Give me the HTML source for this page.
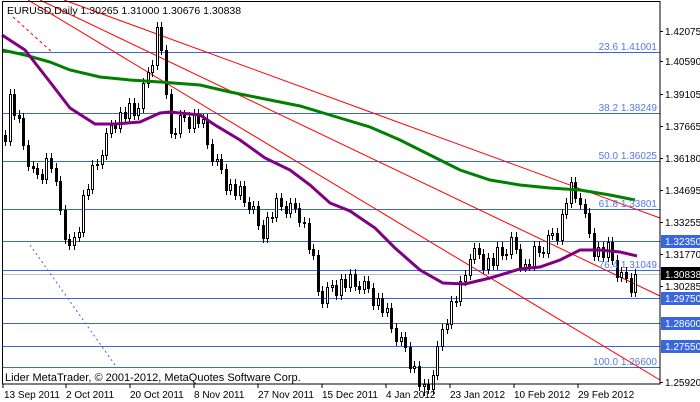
<!DOCTYPE html>
<html><head><meta charset="utf-8"><style>
html,body{margin:0;padding:0;background:#fff;width:700px;height:402px;overflow:hidden}
svg{display:block;font-family:"Liberation Sans",sans-serif}
</style></head><body>
<svg width="700" height="402" viewBox="0 0 700 402" xmlns="http://www.w3.org/2000/svg">
<rect x="0" y="0" width="700" height="402" fill="#fff"/>
<g stroke="#3a66dd" stroke-width="1">
<line x1="2" y1="52.5" x2="660" y2="52.5"/>
<line x1="2" y1="113.5" x2="660" y2="113.5"/>
<line x1="2" y1="161.5" x2="660" y2="161.5"/>
<line x1="2" y1="209.5" x2="660" y2="209.5"/>
<line x1="2" y1="241.5" x2="660" y2="241.5"/>
<line x1="2" y1="270.5" x2="660" y2="270.5"/>
<line x1="2" y1="298.5" x2="660" y2="298.5"/>
<line x1="2" y1="323.5" x2="660" y2="323.5"/>
<line x1="2" y1="346.5" x2="660" y2="346.5"/>
<line x1="2" y1="367.5" x2="660" y2="367.5"/>
</g>
<line x1="2" y1="274.5" x2="660" y2="274.5" stroke="#c0c0c0"/>
<g stroke="#ff0000" stroke-width="1" fill="none">
<line x1="64" y1="0" x2="660" y2="218"/>
<line x1="40" y1="0" x2="660" y2="296"/>
<line x1="28" y1="0" x2="660" y2="380"/>
<line x1="13" y1="17" x2="53" y2="53" stroke-dasharray="3,3"/>
</g>
<line x1="30" y1="245" x2="115" y2="365" stroke="#3a66dd" stroke-dasharray="2,3"/>
<path fill="none" stroke="#000" d="M5.5 130V146M14.5 89V120M19.5 110V123M23.5 113V150M28.5 140V171M33.5 161V173M37.5 163V179M42.5 169V184M51.5 153V173M56.5 163V186M60.5 176V215M65.5 205V244M69.5 234V250M115.5 120V133M125.5 107V123M134.5 98V120M161.5 22V55M166.5 45V99M171.5 89V138M175.5 128V139M184.5 110V122M189.5 112V133M198.5 109V128M207.5 114V149M212.5 139V166M221.5 154V174M226.5 164V195M235.5 179V200M244.5 181V207M249.5 197V214M258.5 201V230M263.5 220V243M272.5 212V223M281.5 193V211M286.5 201V218M295.5 198V213M299.5 203V227M304.5 217V228M309.5 218V254M313.5 244V260M318.5 250V296M322.5 286V308M336.5 280V300M345.5 274V292M355.5 269V291M359.5 281V294M368.5 276V293M373.5 283V310M382.5 293V317M391.5 303V333M396.5 323V346M405.5 332V352M410.5 342V373M419.5 361V391M428.5 379V394M456.5 296V307M479.5 243V259M483.5 249V274M493.5 253V270M502.5 242V260M516.5 232V254M520.5 244V272M529.5 259V271M539.5 241V257M543.5 247V258M557.5 228V245M575.5 177V203M580.5 193V209M585.5 199V218M589.5 208V238M594.5 228V261M603.5 242V262M612.5 237V265M617.5 255V282M626.5 267V283M631.5 273V297M10.5 89V146M46.5 153V184M74.5 232V250M79.5 227V242M83.5 190V237M88.5 184V200M92.5 160V194M97.5 159V170M102.5 150V169M106.5 128V160M111.5 120V138M120.5 107V133M129.5 98V123M138.5 103V120M143.5 78V113M148.5 67V88M152.5 60V77M157.5 22V70M180.5 110V138M194.5 109V133M203.5 114V128M217.5 154V166M230.5 179V195M240.5 181V200M253.5 201V214M267.5 212V243M276.5 193V222M290.5 198V218M327.5 282V308M332.5 280V292M341.5 274V300M350.5 269V292M364.5 276V294M378.5 293V310M387.5 303V317M401.5 332V346M414.5 361V373M424.5 379V396M433.5 370V394M437.5 341V380M442.5 324V351M447.5 319V334M451.5 296V329M460.5 276V306M465.5 270V286M470.5 254V280M474.5 243V264M488.5 253V274M497.5 242V270M506.5 249V260M511.5 232V259M525.5 259V272M534.5 241V271M548.5 230V258M552.5 228V240M562.5 209V245M566.5 198V219M571.5 177V208M598.5 242V261M608.5 237V262M621.5 267V282M635.5 269V297"/>
<path fill="#000" stroke="#000" d="M4.5 135.5h2v6h-2zM13.5 94.5h2v21h-2zM18.5 115.5h2v3h-2zM22.5 118.5h2v27h-2zM27.5 145.5h2v21h-2zM32.5 166.5h2v2h-2zM36.5 168.5h2v6h-2zM41.5 174.5h2v5h-2zM50.5 158.5h2v10h-2zM55.5 168.5h2v13h-2zM59.5 181.5h2v29h-2zM64.5 210.5h2v29h-2zM68.5 239.5h2v6h-2zM114.5 125.5h2v3h-2zM124.5 112.5h2v6h-2zM133.5 103.5h2v12h-2zM160.5 27.5h2v23h-2zM165.5 50.5h2v44h-2zM170.5 94.5h2v39h-2zM174.5 133.5h2v1h-2zM183.5 115.5h2v2h-2zM188.5 117.5h2v11h-2zM197.5 114.5h2v9h-2zM206.5 119.5h2v25h-2zM211.5 144.5h2v17h-2zM220.5 159.5h2v10h-2zM225.5 169.5h2v21h-2zM234.5 184.5h2v11h-2zM243.5 186.5h2v16h-2zM248.5 202.5h2v7h-2zM257.5 206.5h2v19h-2zM262.5 225.5h2v13h-2zM271.5 217.5h2v1h-2zM280.5 198.5h2v8h-2zM285.5 206.5h2v7h-2zM294.5 203.5h2v5h-2zM298.5 208.5h2v14h-2zM303.5 222.5h2v1h-2zM308.5 223.5h2v26h-2zM312.5 249.5h2v6h-2zM317.5 255.5h2v36h-2zM321.5 291.5h2v12h-2zM335.5 285.5h2v10h-2zM344.5 279.5h2v8h-2zM354.5 274.5h2v12h-2zM358.5 286.5h2v3h-2zM367.5 281.5h2v7h-2zM372.5 288.5h2v17h-2zM381.5 298.5h2v14h-2zM390.5 308.5h2v20h-2zM395.5 328.5h2v13h-2zM404.5 337.5h2v10h-2zM409.5 347.5h2v21h-2zM418.5 366.5h2v20h-2zM427.5 384.5h2v5h-2zM455.5 301.5h2v1h-2zM478.5 248.5h2v6h-2zM482.5 254.5h2v15h-2zM492.5 258.5h2v7h-2zM501.5 247.5h2v8h-2zM515.5 237.5h2v12h-2zM519.5 249.5h2v18h-2zM528.5 264.5h2v2h-2zM538.5 246.5h2v6h-2zM542.5 252.5h2v1h-2zM556.5 233.5h2v7h-2zM574.5 182.5h2v16h-2zM579.5 198.5h2v6h-2zM584.5 204.5h2v9h-2zM588.5 213.5h2v20h-2zM593.5 233.5h2v23h-2zM602.5 247.5h2v10h-2zM611.5 242.5h2v18h-2zM616.5 260.5h2v17h-2zM625.5 272.5h2v6h-2zM630.5 278.5h2v14h-2z"/>
<path fill="#fff" stroke="#000" d="M9.5 94.5h2v47h-2zM45.5 158.5h2v21h-2zM73.5 237.5h2v8h-2zM78.5 232.5h2v5h-2zM82.5 195.5h2v37h-2zM87.5 189.5h2v6h-2zM91.5 165.5h2v24h-2zM96.5 164.5h2v1h-2zM101.5 155.5h2v9h-2zM105.5 133.5h2v22h-2zM110.5 125.5h2v8h-2zM119.5 112.5h2v16h-2zM128.5 103.5h2v15h-2zM137.5 108.5h2v7h-2zM142.5 83.5h2v25h-2zM147.5 72.5h2v11h-2zM151.5 65.5h2v7h-2zM156.5 27.5h2v38h-2zM179.5 115.5h2v18h-2zM193.5 114.5h2v14h-2zM202.5 119.5h2v4h-2zM216.5 159.5h2v2h-2zM229.5 184.5h2v6h-2zM239.5 186.5h2v9h-2zM252.5 206.5h2v3h-2zM266.5 217.5h2v21h-2zM275.5 198.5h2v19h-2zM289.5 203.5h2v10h-2zM326.5 287.5h2v16h-2zM331.5 285.5h2v2h-2zM340.5 279.5h2v16h-2zM349.5 274.5h2v13h-2zM363.5 281.5h2v8h-2zM377.5 298.5h2v7h-2zM386.5 308.5h2v4h-2zM400.5 337.5h2v4h-2zM413.5 366.5h2v2h-2zM423.5 384.5h2v2h-2zM432.5 375.5h2v14h-2zM436.5 346.5h2v29h-2zM441.5 329.5h2v17h-2zM446.5 324.5h2v5h-2zM450.5 301.5h2v23h-2zM459.5 281.5h2v20h-2zM464.5 275.5h2v6h-2zM469.5 259.5h2v16h-2zM473.5 248.5h2v11h-2zM487.5 258.5h2v11h-2zM496.5 247.5h2v18h-2zM505.5 254.5h2v1h-2zM510.5 237.5h2v17h-2zM524.5 264.5h2v3h-2zM533.5 246.5h2v20h-2zM547.5 235.5h2v18h-2zM551.5 233.5h2v2h-2zM561.5 214.5h2v26h-2zM565.5 203.5h2v11h-2zM570.5 182.5h2v21h-2zM597.5 247.5h2v9h-2zM607.5 242.5h2v15h-2zM620.5 272.5h2v5h-2zM634.5 274.5h2v18h-2z"/>
<polyline fill="none" stroke="#008000" stroke-width="3" points="2,50 25,55 50,62 70,70 100,77 130,80 160,82 200,85 230,92 260,98 300,106 330,115 370,127 400,140 430,155 460,170 490,180 520,185 550,188 580,190 610,195 635,200"/>
<polyline fill="none" stroke="#800080" stroke-width="3" points="2,35 25,50 50,82 70,108 95,124 115,124 140,122 160,113 170,112 200,115 215,125 240,140 265,158 290,170 310,185 330,203 350,211 375,228 395,248 420,270 443,283 465,284 490,278 520,269 540,267 560,260 580,250 600,250 620,252 637,256"/>
<g font-size="10" fill="#5577ee" text-anchor="end">
<text x="657" y="50">23.6 1.41001</text>
<text x="657" y="111">38.2 1.38249</text>
<text x="657" y="159">50.0 1.36025</text>
<text x="657" y="207">61.8 1.33801</text>
<text x="657" y="268">76.4 1.31049</text>
<text x="657" y="365">100.0 1.26600</text>
</g>
<rect x="2.5" y="1.5" width="657.5" height="382.5" fill="none" stroke="#000"/>
<text x="7" y="14" font-size="10.5" fill="#000">EURUSD,Daily  1.30265 1.31000 1.30676 1.30838</text>
<text x="5" y="381" font-size="11" fill="#000">Lider MetaTrader, © 2001-2012, MetaQuotes Software Corp.</text>
<g font-size="10" fill="#000">
<text x="665" y="35">1.42075</text>
<text x="665" y="65">1.40590</text>
<text x="665" y="98">1.39105</text>
<text x="665" y="130">1.37665</text>
<text x="665" y="162">1.36180</text>
<text x="665" y="194">1.34695</text>
<text x="665" y="226">1.33255</text>
<text x="665" y="258">1.31770</text>
<text x="665" y="290">1.30285</text>
<text x="665" y="386">1.25920</text>
</g>
<g stroke="#000"><line x1="660" y1="31.5" x2="663" y2="31.5"/><line x1="660" y1="61.5" x2="663" y2="61.5"/><line x1="660" y1="94.5" x2="663" y2="94.5"/><line x1="660" y1="126.5" x2="663" y2="126.5"/><line x1="660" y1="158.5" x2="663" y2="158.5"/><line x1="660" y1="190.5" x2="663" y2="190.5"/><line x1="660" y1="222.5" x2="663" y2="222.5"/><line x1="660" y1="254.5" x2="663" y2="254.5"/><line x1="660" y1="286.5" x2="663" y2="286.5"/><line x1="660" y1="382.5" x2="663" y2="382.5"/></g>
<g font-size="10" fill="#fff">
<rect x="661" y="235" width="39" height="13" fill="#3a66dd"/><text x="665" y="245">1.32350</text>
<rect x="661" y="267" width="39" height="13" fill="#000"/><text x="665" y="278">1.30838</text>
<rect x="661" y="292" width="39" height="13" fill="#3a66dd"/><text x="665" y="302">1.29750</text>
<rect x="661" y="317" width="39" height="13" fill="#3a66dd"/><text x="665" y="327">1.28600</text>
<rect x="661" y="340" width="39" height="13" fill="#3a66dd"/><text x="665" y="350">1.27550</text>
</g>
<g font-size="10" fill="#000">
<text x="4" y="398">13 Sep 2011</text>
<text x="66" y="398">2 Oct 2011</text>
<text x="130" y="398">20 Oct 2011</text>
<text x="194" y="398">8 Nov 2011</text>
<text x="258" y="398">27 Nov 2011</text>
<text x="322" y="398">15 Dec 2011</text>
<text x="386" y="398">4 Jan 2012</text>
<text x="450" y="398">23 Jan 2012</text>
<text x="514" y="398">10 Feb 2012</text>
<text x="578" y="398">29 Feb 2012</text>
</g>
<g stroke="#000"><line x1="3" y1="384" x2="3" y2="388"/><line x1="66" y1="384" x2="66" y2="388"/><line x1="130" y1="384" x2="130" y2="388"/><line x1="194" y1="384" x2="194" y2="388"/><line x1="258" y1="384" x2="258" y2="388"/><line x1="322" y1="384" x2="322" y2="388"/><line x1="386" y1="384" x2="386" y2="388"/><line x1="450" y1="384" x2="450" y2="388"/><line x1="514" y1="384" x2="514" y2="388"/><line x1="578" y1="384" x2="578" y2="388"/></g>
</svg>
</body></html>
